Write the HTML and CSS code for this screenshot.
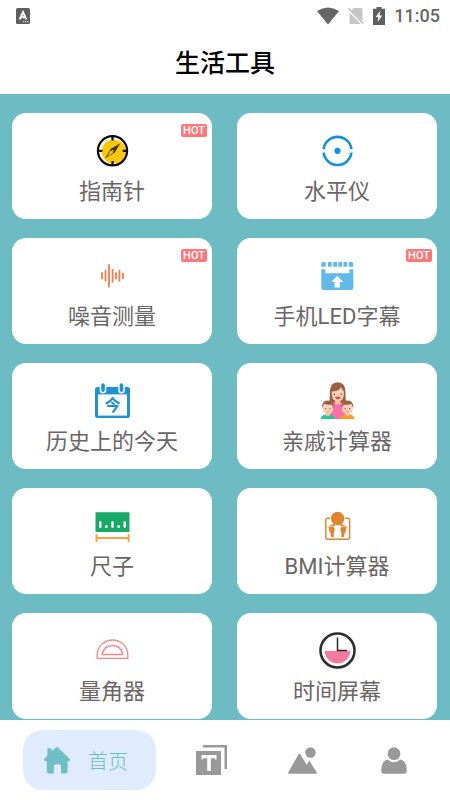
FILE: index.html
```html
<!DOCTYPE html>
<html lang="zh-CN">
<head>
<meta charset="utf-8">
<meta name="viewport" content="width=device-width, initial-scale=1">
<title>生活工具</title>
<link rel="stylesheet" href="styles.css">
</head>
<body>
<header class="header">
  <div class="status">
    <svg class="status-app" width="14" height="16" viewBox="0 0 14 16" aria-hidden="true"><rect width="14" height="16" rx="1.5" fill="#5f5f5f"/><path d="M3.600 11.500 7 4l3.400 7.500M5 9.200h4" fill="none" stroke="#fff" stroke-width="1.9"/><path d="M7 13.800h1.200m.8 0h1.200m.8 0h1.200" stroke="#fff" stroke-width="1.1"/></svg>
    <svg width="22" height="18" viewBox="0 0 22 18" aria-hidden="true"><path d="M0 4Q11-3 22 4L11 17.500Z" fill="#666"/></svg>
    <svg width="16" height="18" viewBox="0 0 16 18" aria-hidden="true"><path d="M6 1h7.500q1 0 1 1v12.200L3.300 3.500ZM1.500 5.700 12.900 17H2.500q-1 0-1-1Z" fill="#c6c6c6"/><path d="m.7 1.400 14.600 15.200" stroke="#bdbdbd" stroke-width="1.4"/></svg>
    <svg width="12" height="18" viewBox="0 0 12 18" aria-hidden="true"><path d="M3.500 0h5v1.700H12V18H0V1.700h3.500Z" fill="#5f5f5f"/><path d="M7.300 3.700 2.700 10h2.700l-.8 5L9.300 8.500H6.500Z" fill="#fff"/></svg>
    <time class="clock">11:05</time>
  </div>
  <h1 class="title">生活工具</h1>
</header>

<main class="tools">
  <button class="card" type="button">
    <svg class="icon" viewBox="0 0 36 36" aria-hidden="true"><circle cx="19.7" cy="18.6" r="12" fill="#fec802"/><circle cx="18.5" cy="17.8" r="14.6" fill="none" stroke="#0b0b0b" stroke-width="2.2"/><path d="M18.500 3v4.600m0 20.400v5M3.500 17.800h4.800m20.400 0h4.800" stroke="#0b0b0b" stroke-width="2.2"/><path d="M26.300 10.200 20.700 19.800l-9.600 5.500 5.600-9.600Z" fill="#3d3827"/><path d="m16.700 17.200 2.800 2.200-6.200 4Z" fill="#fec802"/><circle cx="18.7" cy="17.8" r=".9" fill="#fec802"/></svg>
    <span class="label">指南针</span>
    <span class="hot">HOT</span>
  </button>
  <button class="card" type="button">
    <svg class="icon" viewBox="0 0 36 36" aria-hidden="true"><path d="M4.600 16.200a14 14 0 0 1 27.800 0M4.600 19.600a14 14 0 0 0 27.800 0" fill="none" stroke="#1290db" stroke-width="2.6"/><circle cx="18.5" cy="17.8" r="3.1" fill="#1290db"/></svg>
    <span class="label">水平仪</span>
  </button>
  <button class="card" type="button">
    <svg class="icon" viewBox="0 0 36 36" aria-hidden="true"><path d="M8 15v5.600M11.500 12.700v10.100M15 7v21.600M18.600 11.800v12M22 15v5.600M25.400 12.700v10.100M29 15.400v4.800" fill="none" stroke="#f47b4c" stroke-width="1.8" stroke-linecap="round"/></svg>
    <span class="label">噪音测量</span>
    <span class="hot">HOT</span>
  </button>
  <button class="card" type="button">
    <svg class="icon" viewBox="0 0 36 36" aria-hidden="true"><path d="M4 4h2.700v4.700H2.300V5.700Q2.300 4 4 4Zm5 0h3.800v4.700H9Zm5.200 0H18v4.700h-3.800Zm5.100 0h3.800v4.700h-3.800Zm5.200 0h3.600v4.700h-3.600Zm5.200 0h2.900q1.700 0 1.700 1.700v3h-4.600ZM2.300 11.300h4v4h24v-4h4v18.200q0 2.500-2.500 2.500h-27q-2.500 0-2.500-2.500Z" fill="#63b8ea"/><path d="m18.300 17.700 6 6.300H21v5.600h-5.400V24h-3.300Z" fill="#fff"/></svg>
    <span class="label">手机LED字幕</span>
    <span class="hot">HOT</span>
  </button>
  <button class="card" type="button">
    <svg class="icon" viewBox="0 0 36 36" aria-hidden="true"><rect x="1" y="4" width="35" height="31" rx="2.5" fill="#1d92d8"/><path d="M4 11.400h29v21.200H4Z" fill="#fff"/><path d="M9 2v5.200M27.500 2v5.200" stroke="#fff" stroke-width="6.6" stroke-linecap="round"/><path d="M9 2v5.200M27.500 2v5.200" stroke="#1d92d8" stroke-width="3.6" stroke-linecap="round"/><text class="icon-day" x="18.6" y="28.4">今</text></svg>
    <span class="label">历史上的今天</span>
  </button>
  <button class="card" type="button">
    <svg class="icon" viewBox="0 0 36 36" aria-hidden="true"><path d="M9.500 21Q11 19 10.800 9.500 11-.7 18.700-.7T26.500 9.500Q26.300 19 28 21Z" fill="#9b6044"/><path d="M11 36V25q0-5.400 5-5.400h5.500q5 0 5 5.400v11Z" fill="#fb6fa9"/><path d="M16 15h5.500v5q-2.700 3.800-5.500 0Z" fill="#f3bda0"/><path d="M12.800 8.500q6.400 0 9.300-4.300 1 2.800 2.700 4.100v3.500q0 6.200-6 6.200t-6-6.200Z" fill="#fbd2b8"/><path d="M15.200 10.500v1.600m7-1.600v1.600" stroke="#664233" stroke-width="1.1"/><path d="M15.800 13.800h6q-.8 2.500-3 2.500t-3-2.500Z" fill="#ef4636"/><path d="M1.700 36q.6-4.500 5.800-4.500h2.600q5.200 0 5.800 4.500Z" fill="#24c79c"/><path d="M21.300 36q.6-4.500 5.800-4.500h2.600q5.200 0 5.800 4.500Z" fill="#ff9824"/><path d="M6.500 29h4.600v3.200q-2.300 2.200-4.600 0Zm19.600 0h4.600v3.200q-2.300 2.200-4.600 0Z" fill="#f3bda0"/><circle cx="8.8" cy="25.7" r="5.4" fill="#fbd2b8"/><circle cx="28.5" cy="25.7" r="5.4" fill="#fbd2b8"/><path d="M3 25q-.2-7.500 5.800-7.500t5.900 7.500l-1.800-3.400q-5 .8-7.500-.8Zm31.400 0q.2-7.500-5.800-7.500T22.700 25l1.800-3.400q5 .8 7.500-.8Z" fill="#9b6044"/><path d="M6.600 25v1.200m4.400-1.200v1.200m15.300-1.200v1.200m4.400-1.200v1.200" stroke="#664233" stroke-width=".9"/><path d="M7.400 28.300q1.400 1 2.800 0m16.900 0q1.400 1 2.800 0" fill="none" stroke="#ef6c55" stroke-width=".8"/></svg>
    <span class="label">亲戚计算器</span>
  </button>
  <button class="card" type="button">
    <svg class="icon" viewBox="0 0 36 36" aria-hidden="true"><rect x="1.5" y="4.3" width="34" height="19.7" rx=".6" fill="#18a966"/><path d="M6.300 14.200v4.600M18.500 14.200v4.600M30.700 14.200v4.600M12.400 18.200v.7M24.600 18.200v.7" stroke="#fff" stroke-width="2.4" stroke-linecap="round"/><path d="M2.500 27v6M34.600 27v6M3 30h31" fill="none" stroke="#ffa136" stroke-width="2" stroke-linecap="round"/></svg>
    <span class="label">尺子</span>
  </button>
  <button class="card" type="button">
    <svg class="icon" viewBox="0 0 36 36" aria-hidden="true"><rect x="6.8" y="10.3" width="23.8" height="21" rx="2" fill="#fff" stroke="#e0862f" stroke-width="1.5"/><circle cx="18.6" cy="10.5" r="7.6" fill="#fff"/><circle cx="18.6" cy="10.5" r="6.7" fill="#e0862f"/><g id="foot" fill="#e0862f"><path d="M10.200 19.600q3.500-2.400 5.300.4 1 2-.5 4.600-.6 1.800 0 3.600-.4 1.600-2.200 1-1.300-.8-1.100-3.700-2.600-3.500-1.500-5.900Z"/><circle cx="14.7" cy="17.2" r="1.2"/><circle cx="12.7" cy="17.3" r=".9"/><circle cx="11.2" cy="18" r=".8"/><circle cx="10" cy="19.2" r=".7"/></g><use href="#foot" transform="matrix(-1 0 0 1 37.2 0)"/></svg>
    <span class="label">BMI计算器</span>
  </button>
  <button class="card" type="button">
    <svg class="icon" viewBox="0 0 36 36" aria-hidden="true"><path d="M3.200 25.300V22a15.300 15 0 0 1 30.600 0v3.300ZM8.200 21.500a10.400 10.400 0 0 1 20.600 0Z" fill="none" stroke="#f98686" stroke-width="1.3"/><path d="M9.500 17q3-4.700 9-4.700t9 4.700" fill="none" stroke="#f98686" stroke-width="1.5" stroke-dasharray="1 1"/></svg>
    <span class="label">量角器</span>
  </button>
  <button class="card" type="button">
    <svg class="icon" viewBox="0 0 36 36" aria-hidden="true"><circle cx="18.5" cy="17.5" r="17" fill="none" stroke="#2e2e31" stroke-width="2.6"/><path d="M5.800 18h25.400a12.700 12.300 0 0 1-25.400 0Z" fill="#f4799e"/><path d="M18.500 4.400v13.200H28" fill="none" stroke="#2e2e31" stroke-width="1.5"/></svg>
    <span class="label">时间屏幕</span>
  </button>
</main>

<nav class="tabs">
  <a class="tab tab-active" href="#home" aria-current="page">
    <svg width="26" height="27" viewBox="0 0 26 27" aria-hidden="true"><path d="M3.400 2q0-.7.700-.7h2.600q.7 0 .7.700v2.300L12 .5q1-.8 2 0l11.600 11.200q1 1.200-.2 2.200-.7.500-1.800.4V24q0 2.500-2.500 2.500h-4V20q0-2.700-2.700-2.700h-2.200Q9.800 17.300 9.800 20v6.500H5.300q-2.500 0-2.500-2.500v-9.700q-1.700.1-2.400-.8-.8-1 .2-2l2.800-2.900Z" fill="#6dbec5"/></svg>
    <span>首页</span>
  </a>
  <a class="tab" href="#text" aria-label="文字">
    <svg width="31" height="30" viewBox="0 0 31 30" aria-hidden="true"><path d="M7 0h24v24h-2.500V2.500H7ZM0 6h25v24H0Z" fill="#999"/><path d="M5.500 10h15v4.500H19v-1.300h-4.200V26h-3.600V13.200H7v1.300H5.500Z" fill="#fff"/></svg>
  </a>
  <a class="tab" href="#pictures" aria-label="图片">
    <svg width="29" height="27" viewBox="0 0 29 27" aria-hidden="true"><circle cx="22.5" cy="5.5" r="5.2" fill="#999"/><path d="M.3 25.300 10.600 7.200q.8-1.200 1.600 0l6.600 10.600 1.800-3.200q.7-1 1.400 0l6.600 10.700q.6 1.400-.8 1.400H1.100q-1.400 0-.8-1.400Z" fill="#999"/></svg>
  </a>
  <a class="tab" href="#me" aria-label="我的">
    <svg width="26" height="27" viewBox="0 0 26 27" aria-hidden="true"><circle cx="13" cy="6.7" r="6.4" fill="#999"/><path d="M6.500 12.600q6.500 5.400 13 0 6 1.200 6.300 11.400 0 2.700-3 2.700H3.200q-3 0-3-2.700.3-10.200 6.300-11.400Z" fill="#999"/></svg>
  </a>
</nav>
</body>
</html>
```
FILE: styles.css
```css
* {
  box-sizing: border-box;
}

body {
  margin: 0;
  min-height: 100vh;
  display: flex;
  flex-direction: column;
  background: #fff;
  font-family: Roboto, "Noto Sans CJK SC", sans-serif;
}

.status {
  display: flex;
  align-items: center;
  gap: 9px;
  height: 32px;
  padding: 0 10px 0 16px;
}

.status svg {
  flex: none;
}

.status .status-app {
  margin-right: auto;
}

.clock {
  color: #666;
  font-size: 18px;
  font-weight: 500;
  line-height: 32px;
}

.title {
  margin: 0;
  padding-top: 2px;
  color: #000;
  font-size: 25px;
  font-weight: 500;
  line-height: 60px;
  text-align: center;
}

.tools {
  flex: 1;
  display: grid;
  grid-template-columns: 1fr 1fr;
  align-content: start;
  gap: 19px 25px;
  padding: 19px 13px 1px 12px;
  background: #6dbcc4;
}

.card {
  position: relative;
  display: flex;
  flex-direction: column;
  align-items: center;
  gap: 8px;
  padding: 20px 0 12px;
  border: 0;
  border-radius: 14px;
  background: #fff;
  color: #6b6665;
  font: inherit;
}

.icon {
  width: 36px;
  height: 36px;
  overflow: visible;
}

.icon-day {
  fill: #1d92d8;
  font-family: "Noto Sans CJK SC", sans-serif;
  font-size: 16px;
  font-weight: 700;
  text-anchor: middle;
}

.label {
  font-size: 22px;
  line-height: 30px;
}

.hot {
  position: absolute;
  top: 11px;
  right: 5px;
  width: 26px;
  border-radius: 2px;
  background: #fd7878;
  color: #fff;
  font-size: 11px;
  font-weight: 500;
  line-height: 13px;
  text-align: center;
}

.tabs {
  display: flex;
  padding: 10px 11px 10px 23px;
  background: #fff;
}

.tab {
  flex: 1;
  display: flex;
  align-items: center;
  justify-content: center;
  height: 60px;
  text-decoration: none;
}

.tab-active {
  flex: none;
  gap: 18px;
  margin-right: 10px;
  padding: 0 28px 0 21px;
  border-radius: 20px;
  background: #e0ebff;
  color: #6dbec5;
  font-size: 20px;
  font-weight: 300;
}
```
